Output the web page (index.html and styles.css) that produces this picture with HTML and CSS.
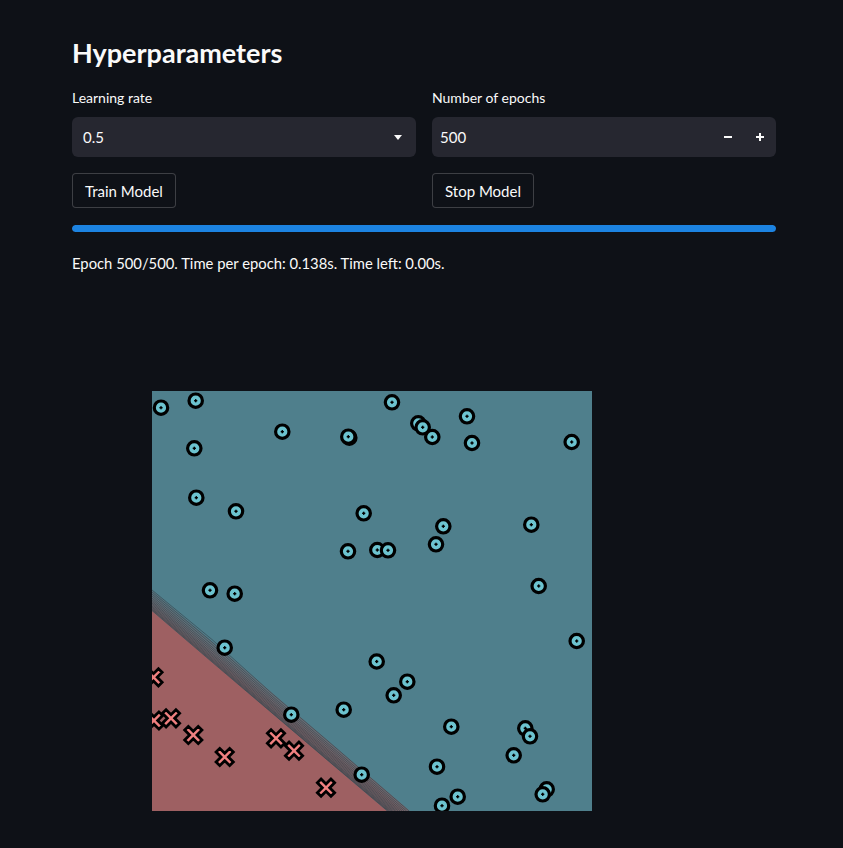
FILE: index.html
```html
<!DOCTYPE html>
<html>
<head>
<meta charset="utf-8">
<link rel="stylesheet" href="styles.css">
</head>
<body>
<main class="main">
  <h2 class="title">Hyperparameters</h2>
  <div class="cols">
    <div class="col">
      <label class="label">Learning rate</label>
      <div class="select">
        <span class="value">0.5</span>
        <svg class="chev" width="8" height="5" viewBox="0 0 8 5"><polygon points="0,0 8,0 4,5" fill="#fafafa"/></svg>
      </div>
      <button class="btn">Train Model</button>
    </div>
    <div class="col">
      <label class="label">Number of epochs</label>
      <div class="number">
        <span class="value num">500</span>
        <div class="steps">
          <span class="step"><svg width="10" height="10" viewBox="0 0 10 10"><rect x="1" y="4" width="8" height="2" fill="#fafafa"/></svg></span>
          <span class="step"><svg width="10" height="10" viewBox="0 0 10 10"><rect x="1" y="4" width="8" height="2" fill="#fafafa"/><rect x="4" y="1" width="2" height="8" fill="#fafafa"/></svg></span>
        </div>
      </div>
      <button class="btn">Stop Model</button>
    </div>
  </div>
  <div class="progress"><div class="bar" style="width:100%"></div></div>
  <p class="status">Epoch 500/500. Time per epoch: 0.138s. Time left: 0.00s.</p>
  <div class="figure">
    <svg class="plot" width="440" height="420" viewBox="0 0 440 420">
      <defs>
        <g id="c">
          <circle r="6.7" fill="#6cc3cf" stroke="#000" stroke-width="3.2"/>
          <rect x="-1.6" y="-0.7" width="3.2" height="1.4" fill="#000"/>
          <rect x="-0.7" y="-1.6" width="1.4" height="3.2" fill="#000"/>
        </g>
        <g id="x">
          <polygon transform="rotate(45)" points="-2.6,-9.6 2.6,-9.6 2.6,-2.6 9.6,-2.6 9.6,2.6 2.6,2.6 2.6,9.6 -2.6,9.6 -2.6,2.6 -9.6,2.6 -9.6,-2.6 -2.6,-2.6" fill="#f08080" stroke="#000" stroke-width="2.8" stroke-linejoin="miter"/>
        </g>
        <linearGradient id="band" gradientUnits="userSpaceOnUse" x1="0" y1="220" x2="12" y2="205">
          <stop offset="0" stop-color="#7a6266"/>
          <stop offset="1" stop-color="#4f7a86"/>
        </linearGradient>
      </defs>
      <rect width="440" height="420" fill="#4f7f8c"/>
      <polygon points="0,199 258,420 235,420 0,220" fill="url(#band)"/>
      <polygon points="0,220 235,420 0,420" fill="#9e6062"/>
      <g stroke="#34424a" stroke-width="0.6" fill="none">
        <polyline points="0,219.5 60,271 120,322 180,373 235.5,420"/>
        <polyline points="0,218.5 60,270 120,321.5 180,372.5 236.5,420"/>
        <polyline points="0,217.5 60,269 120,320.5 180,371.5 237.5,420"/>
        <polyline points="0,216.2 60,267.8 120,319.5 180,370.5 238.8,420"/>
        <polyline points="0,215 60,266.5 120,318.5 180,369.5 240,420"/>
        <polyline points="0,213.5 60,265 120,317 180,368 241.5,420"/>
        <polyline points="0,212 60,263.5 120,315.5 180,366.5 243,420"/>
        <polyline points="0,210.5 60,262 120,314 180,365 244.5,420"/>
        <polyline points="0,208.8 60,260 120,312.5 180,363.5 246.2,420"/>
        <polyline points="0,207 60,258 120,311 180,362 248,420"/>
        <polyline points="0,205 60,256 120,309 180,360 250,420"/>
        <polyline points="0,203 60,253.5 120,307 180,358 252.2,420"/>
        <polyline points="0,201 60,251 120,305 180,356 254.5,420"/>
        <polyline points="0,199 60,248.5 120,302.5 180,353.5 257,420"/>
      </g>
      <use href="#c" x="9" y="16.7"/>
      <use href="#c" x="43.7" y="9.7"/>
      <use href="#c" x="42.3" y="57.3"/>
      <use href="#c" x="130.3" y="40.7"/>
      <use href="#c" x="197.3" y="46.7"/>
      <use href="#c" x="196.3" y="45.7"/>
      <use href="#c" x="44.3" y="106.7"/>
      <use href="#c" x="84" y="120.3"/>
      <use href="#c" x="211.7" y="122.3"/>
      <use href="#c" x="196" y="160.3"/>
      <use href="#c" x="58" y="199.3"/>
      <use href="#c" x="82.7" y="202.7"/>
      <use href="#c" x="240" y="11.3"/>
      <use href="#c" x="266.3" y="32.3"/>
      <use href="#c" x="270.7" y="36.3"/>
      <use href="#c" x="280.3" y="46"/>
      <use href="#c" x="315" y="25.3"/>
      <use href="#c" x="320" y="52"/>
      <use href="#c" x="419.7" y="51"/>
      <use href="#c" x="291.3" y="135.3"/>
      <use href="#c" x="284" y="153.3"/>
      <use href="#c" x="225.3" y="159"/>
      <use href="#c" x="236" y="159.3"/>
      <use href="#c" x="379.3" y="133.7"/>
      <use href="#c" x="386.7" y="195"/>
      <use href="#c" x="72.7" y="256.7"/>
      <use href="#c" x="224.7" y="270.5"/>
      <use href="#c" x="139.3" y="323.7"/>
      <use href="#c" x="191.7" y="318.7"/>
      <use href="#c" x="209.7" y="383.7"/>
      <use href="#c" x="424.7" y="250"/>
      <use href="#c" x="255.3" y="290.7"/>
      <use href="#c" x="241.7" y="304.3"/>
      <use href="#c" x="299.3" y="335.7"/>
      <use href="#c" x="373.3" y="337.3"/>
      <use href="#c" x="378" y="345.3"/>
      <use href="#c" x="361.7" y="364.3"/>
      <use href="#c" x="285" y="375.7"/>
      <use href="#c" x="305.7" y="405.7"/>
      <use href="#c" x="290" y="414.7"/>
      <use href="#c" x="394.7" y="398.3"/>
      <use href="#c" x="390.7" y="403.3"/>
      <use href="#x" x="1.5" y="286.3"/>
      <use href="#x" x="2" y="329.5"/>
      <use href="#x" x="19" y="327.3"/>
      <use href="#x" x="41.3" y="344"/>
      <use href="#x" x="72.7" y="366"/>
      <use href="#x" x="124" y="347.3"/>
      <use href="#x" x="142" y="359.7"/>
      <use href="#x" x="174" y="396.7"/>
    </svg>
  </div>
</main>
</body>
</html>
```

FILE: styles.css
```css
* { box-sizing: border-box; }
html, body {
  margin: 0;
  padding: 0;
  background: #0e1117;
  color: #fafafa;
  font-family: "Lato", "Open Sans", sans-serif;
}
.main {
  width: 704px;
  margin-left: 72px;
  padding-top: 36px;
  display: flex;
  flex-direction: column;
}
.title {
  margin: 0;
  font-size: 27px;
  font-weight: 700;
  line-height: 34px;
  letter-spacing: 0;
}
.cols {
  display: flex;
  gap: 16px;
  margin-top: 18px;
}
.col {
  flex: 1;
  display: flex;
  flex-direction: column;
  align-items: flex-start;
}
.label {
  font-size: 14px;
  line-height: 20px;
  height: 20px;
}
.select, .number {
  margin-top: 9px;
  width: 100%;
  height: 40px;
  background: #262730;
  border-radius: 6px;
  display: flex;
  align-items: center;
}
.select {
  padding: 0 14px 0 11px;
  justify-content: space-between;
}
.number {
  padding-left: 8px;
}
.value {
  font-size: 15px;
}
.num { flex: 1; }
.steps {
  display: flex;
  height: 100%;
}
.step {
  width: 32px;
  display: flex;
  align-items: center;
  justify-content: center;
}
.chev { display: block; }
.btn {
  margin-top: 16px;
  height: 35px;
  padding: 0 12px;
  background: #0e1117;
  color: #fafafa;
  border: 1px solid rgba(250, 250, 250, 0.2);
  border-radius: 4px;
  font-family: inherit;
  font-size: 15px;
}
.progress {
  margin-top: 17px;
  height: 7px;
  border-radius: 4px;
  background: #262730;
  overflow: hidden;
}
.bar {
  height: 100%;
  background: #1c83e1;
  border-radius: 4px;
}
.status {
  margin: 20px 0 0;
  font-size: 14.8px;
  line-height: 22px;
}
.figure {
  margin-top: 117px;
  padding-left: 80px;
}
.plot { display: block; }
```
